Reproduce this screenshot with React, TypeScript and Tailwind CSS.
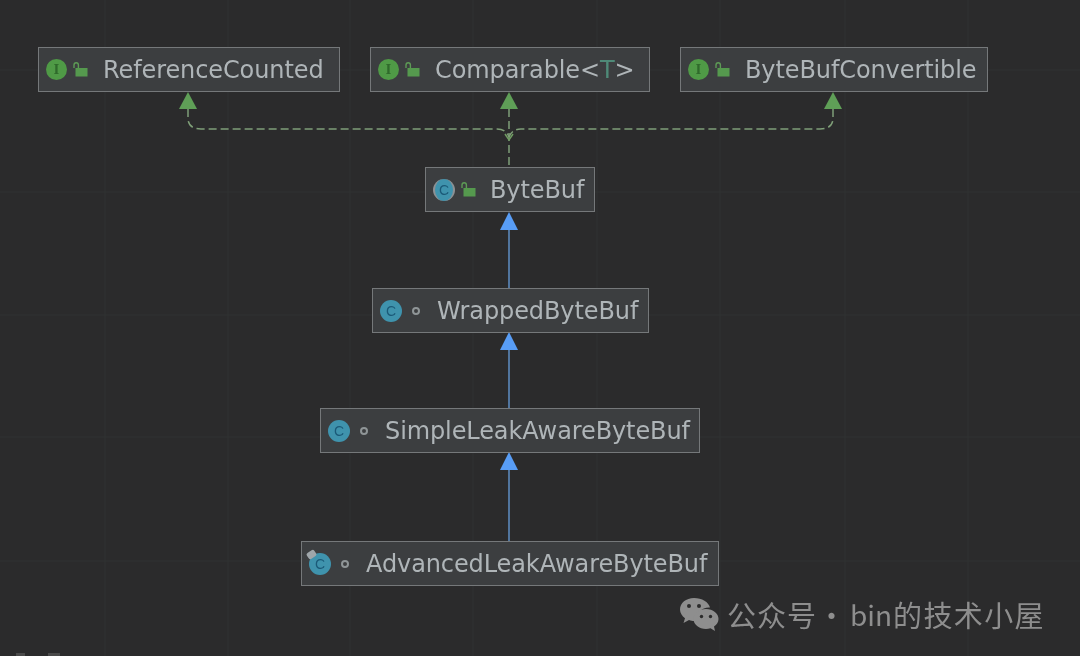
const GRID_X = [105, 228, 350, 473, 597, 720, 845, 968];
const GRID_Y = [70, 192, 315, 437, 561];

const Interface = () => (
  <div className="flex size-[21px] items-center justify-center rounded-full bg-[#4f9a46] text-[15px] leading-none font-bold text-[#2f6a2b] [font-family:'Liberation_Serif',serif]">
    I
  </div>
);

const ClassIcon = ({ leak }: { leak?: boolean }) => (
  <div className="relative flex size-[22px] items-center justify-center rounded-full bg-[#3f93ad] text-[14px] leading-none text-[#1b5a78] [font-family:'Liberation_Sans',sans-serif]">
    C
    {leak && (
      <span className="absolute -top-[2px] -left-[2px] h-[7px] w-[9px] rotate-[-35deg] rounded-[2px] bg-[#9fa6aa]" />
    )}
  </div>
);

const AbstractIcon = () => (
  <div className="relative flex h-[22px] w-[22px] items-center justify-center rounded-full border-x-[2px] border-[#8d9194] bg-[#3f93ad] text-[14px] leading-none text-[#1b5a78] [font-family:'Liberation_Sans',sans-serif]">
    C
  </div>
);

const OpenLock = () => (
  <svg width="15" height="15" viewBox="0 0 15 15" className="shrink-0">
    <path d="M1 6V3a2.200 2.200 0 0 1 4.400 0V6" fill="none" stroke="#5d9a55" strokeWidth="1.4" />
    <rect x="2.500" y="6" width="12" height="8.500" fill="#55994e" />
  </svg>
);

const Dot = () => (
  <div className="ml-[4px] size-[8px] shrink-0 rounded-full border-[2px] border-[#8f9597]" />
);

type NodeProps = {
  box: string;
  icon: React.ReactNode;
  vis: React.ReactNode;
  children: React.ReactNode;
};

const Node = ({ box, icon, vis, children }: NodeProps) => (
  <div
    className={`absolute flex h-[45px] items-center border border-[#75787a] bg-[#3c3e40] pl-[7px] text-[24px] text-[#afb5b8] [font-family:'DejaVu_Sans',sans-serif] ${box}`}
  >
    <div className="flex w-[57px] shrink-0 items-center gap-[6px]">
      {icon}
      {vis}
    </div>
    <span className="whitespace-nowrap tracking-[-0.1px]">{children}</span>
  </div>
);

const Edges = () => (
  <svg width="1080" height="656" className="absolute inset-0">
    {GRID_X.map((x) => (
      <line key={x} x1={x} y1="0" x2={x} y2="656" stroke="#313233" />
    ))}
    {GRID_Y.map((y) => (
      <line key={y} x1="0" y1={y} x2="1080" y2={y} stroke="#313233" />
    ))}
    <g fill="none" stroke="#7f9f78" strokeWidth="1.5" strokeDasharray="8 4">
      <path d="M188 109V118Q188 129 201 129H497Q506 129 509 137" />
      <path d="M833 109V118Q833 129 820 129H521Q512 129 509 137" />
      <path d="M509 109V167" />
    </g>
    <path d="M505 134L509 140L513 134" fill="none" stroke="#6f9c62" strokeWidth="1.5" />
    <path d="M188 92L197 109H179Z" fill="#5f9f57" />
    <path d="M509 92L518 109H500Z" fill="#5f9f57" />
    <path d="M833 92L842 109H824Z" fill="#5f9f57" />
    <g stroke="#5f8fc4" strokeWidth="1.5">
      <line x1="509" y1="229" x2="509" y2="288" />
      <line x1="509" y1="349" x2="509" y2="408" />
      <line x1="509" y1="469" x2="509" y2="541" />
    </g>
    <path d="M509 212L518 230H500Z" fill="#589df6" />
    <path d="M509 332L518 350H500Z" fill="#589df6" />
    <path d="M509 452L518 470H500Z" fill="#589df6" />
    {/* clipped bits of something below the crop */}
    <rect x="16" y="653" width="9" height="3" fill="#4a4a4a" />
    <rect x="48" y="653" width="12" height="3" fill="#4a4a4a" />
  </svg>
);

const WeChat = () => (
  <svg width="40" height="36" viewBox="0 0 40 36">
    <path
      d="M15 2C7 2 1 7 1 13.500C1 17 3 20 6 22.200L4.500 27L10 24C12 24.700 13.500 25 15 25C16 25 17 24.900 18 24.600C17 17 23 11 31 11.500C29.500 6 23 2 15 2Z"
      fill="#8e8e8e"
    />
    <path
      d="M27 13C20 13 14.500 17.500 14.500 23C14.500 28.500 20 33 27 33C28.500 33 30 32.800 31.500 32.200L36 35L35 30.500C37.800 28.500 39.500 26 39.500 23C39.500 17.500 34 13 27 13Z"
      fill="#8e8e8e"
    />
    <circle cx="10" cy="10" r="2" fill="#2b2b2b" />
    <circle cx="20" cy="10" r="2" fill="#2b2b2b" />
    <circle cx="22.500" cy="20.500" r="1.700" fill="#2b2b2b" />
    <circle cx="31.500" cy="20.500" r="1.700" fill="#2b2b2b" />
  </svg>
);

export default function App() {
  return (
    <div className="relative h-[656px] w-[1080px] overflow-hidden bg-[#2b2b2c] blur-[0.5px]">
      <Edges />
      <Node box="left-[38px] top-[47px] w-[302px]" icon={<Interface />} vis={<OpenLock />}>
        ReferenceCounted
      </Node>
      <Node box="left-[370px] top-[47px] w-[280px]" icon={<Interface />} vis={<OpenLock />}>
        Comparable&lt;<span className="text-[#4f8a78]">T</span>&gt;
      </Node>
      <Node box="left-[680px] top-[47px] w-[308px]" icon={<Interface />} vis={<OpenLock />}>
        ByteBufConvertible
      </Node>
      <Node box="left-[425px] top-[167px] w-[170px]" icon={<AbstractIcon />} vis={<OpenLock />}>
        ByteBuf
      </Node>
      <Node box="left-[372px] top-[288px] w-[277px]" icon={<ClassIcon />} vis={<Dot />}>
        WrappedByteBuf
      </Node>
      <Node box="left-[320px] top-[408px] w-[380px]" icon={<ClassIcon />} vis={<Dot />}>
        SimpleLeakAwareByteBuf
      </Node>
      <Node box="left-[301px] top-[541px] w-[418px]" icon={<ClassIcon leak />} vis={<Dot />}>
        AdvancedLeakAwareByteBuf
      </Node>
      <div className="absolute top-[596px] left-[679px] flex items-center text-[29px] leading-[36px] whitespace-nowrap text-[#8e8e8e] [font-family:'Noto_Sans_CJK_SC','Noto_Sans',sans-serif]">
        <WeChat />
        <span className="ml-[8px] w-[90px] tracking-[1px]">公众号</span>
        <span className="w-[33px]">·</span>
        <span className="w-[43px] text-[28px]">bin</span>
        <span className="tracking-[1.400px]">的技术小屋</span>
      </div>
    </div>
  );
}
